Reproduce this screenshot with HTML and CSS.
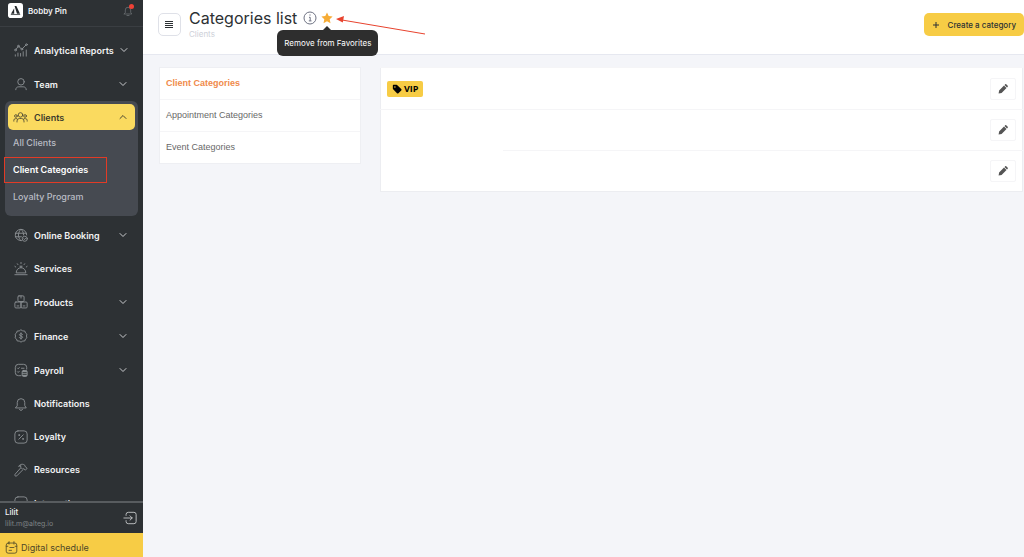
FILE: index.html
```html
<!DOCTYPE html>
<html lang="en">
<head>
    <meta charset="UTF-8">
    <meta name="viewport" content="width=device-width, initial-scale=1.0">
    <title>Categories list</title>
    <link rel="stylesheet" href="styles.css">
</head>
<body>
    <aside class="sidebar">
        <div class="brand">
            <svg class="brand-logo" viewBox="0 0 16 16">
                <rect width="16" height="16" rx="3" fill="#fff"/>
                <path d="M7 3.2h1.9l3.9 8.3H9.6z" fill="#23282b"/>
                <path d="M6.6 5.6v5.9H3.2z" fill="#23282b"/>
                <path d="M3 12.3h10" stroke="#23282b" stroke-width="0.8"/>
            </svg>
            <span class="brand-name">Bobby Pin</span>
            <button type="button" class="bell-btn" aria-label="Notifications">
                <svg class="icon" viewBox="0 0 16 16">
                    <path d="M3 12h10l-1.4-2.2V6.6a3.6 3.6 0 0 0-7.2 0v3.2zM6.6 14h2.8"/>
                </svg>
                <span class="bell-dot"></span>
            </button>
        </div>

        <nav class="menu">
            <a href="#" class="menu-item">
                <svg class="icon" viewBox="0 0 16 16">
                    <path d="M1.5 15v-1.5M4.5 15v-3.5M7.5 15v-3M10.5 15v-5M14 15V8"/>
                    <path d="M2.3 7.2l2.2-2.8M5.8 4.3l2.4 2.2M9.7 6.3l3.7-3.7"/>
                    <circle cx="1.7" cy="8" r="1"/><circle cx="5" cy="3.6" r="1"/><circle cx="9" cy="7" r="1"/><circle cx="14.2" cy="1.9" r="1"/>
                </svg>
                <span>Analytical Reports</span>
                <svg class="chevron" viewBox="0 0 8 8"><path d="M1 2.5l3 3 3-3"/></svg>
            </a>
            <a href="#" class="menu-item">
                <svg class="icon" viewBox="0 0 16 16">
                    <circle cx="8" cy="5.5" r="3.7"/>
                    <path d="M2 14.5c.2-2.2 1.4-3.3 3.5-3.3h5c2.1 0 3.3 1.1 3.5 3.3"/>
                </svg>
                <span>Team</span>
                <svg class="chevron" viewBox="0 0 8 8"><path d="M1 2.5l3 3 3-3"/></svg>
            </a>

            <div class="menu-group">
                <a href="#" class="menu-item active">
                    <svg class="icon icon-wide" viewBox="0 0 18 16">
                        <circle cx="9" cy="5.5" r="2.7"/><circle cx="3.5" cy="6.8" r="1.6"/><circle cx="14.5" cy="6.8" r="1.6"/>
                        <path d="M4.8 14v-1.2a3 3 0 0 1 3-3h2.4a3 3 0 0 1 3 3V14M1 13v-1a2 2 0 0 1 2-2h1.5M17 13v-1a2 2 0 0 0-2-2h-1.5"/>
                    </svg>
                    <span>Clients</span>
                    <svg class="chevron" viewBox="0 0 8 8"><path d="M1 5.5l3-3 3 3"/></svg>
                </a>
                <a href="#" class="submenu-item">All Clients</a>
                <a href="#" class="submenu-item current">Client Categories</a>
                <a href="#" class="submenu-item">Loyalty Program</a>
            </div>

            <a href="#" class="menu-item">
                <svg class="icon" viewBox="0 0 16 16">
                    <path d="M8.5 14.5a6.5 6.5 0 1 1 6-6.5M8 1.5c-4 3.500-4 9.500 0 13M8 1.500c2 1.700 3 4 3 6.500M1.500 6h12.700M1.500 10H8.500"/>
                    <circle cx="12.3" cy="12.3" r="2.9"/><path d="M11.2 12.3l.8.9 1.4-1.6"/>
                </svg>
                <span>Online Booking</span>
                <svg class="chevron" viewBox="0 0 8 8"><path d="M1 2.5l3 3 3-3"/></svg>
            </a>
            <a href="#" class="menu-item plain">
                <svg class="icon" viewBox="0 0 16 16">
                    <path d="M2.5 12a5.5 5.5 0 0 1 11 0zM1 14.5h14M8 6.5V5M6.7 4.8h2.6M8 .5v1.3M3.8 2l.7 1M12.2 2l-.7 1M1 5l1 .7M15 5l-1 .7"/>
                </svg>
                <span>Services</span>
            </a>
            <a href="#" class="menu-item">
                <svg class="icon" viewBox="0 0 16 16">
                    <rect x="4.5" y="1" width="7" height="6.5" rx="1.2"/>
                    <rect x="1" y="8" width="7" height="6.8" rx="1.2"/>
                    <rect x="8" y="8" width="7" height="6.8" rx="1.2"/>
                    <path d="M8 1v2.5M3.5 12.5h2M10.5 12.5h2"/>
                </svg>
                <span>Products</span>
                <svg class="chevron" viewBox="0 0 8 8"><path d="M1 2.5l3 3 3-3"/></svg>
            </a>
            <a href="#" class="menu-item">
                <svg class="icon" viewBox="0 0 16 16">
                    <path d="M8 1l2 1.2 2.3.1.8 2.2L14.8 6l-.6 2 .6 2-1.700 1.500-.8 2.200-2.300.1L8 15l-2-1.200-2.300-.1-.8-2.200L1.200 10l.6-2-.6-2 1.700-1.500.8-2.200L6 2.200z"/>
                    <path d="M9.8 6.3c-.4-.7-1-.9-1.8-.9-1.1 0-1.8.5-1.8 1.2C6.2 8.500 9.800 7.400 9.800 9.400c0 .8-.8 1.300-1.800 1.300s-1.600-.4-1.900-1.100M8 4.400v7.200"/>
                </svg>
                <span>Finance</span>
                <svg class="chevron" viewBox="0 0 8 8"><path d="M1 2.5l3 3 3-3"/></svg>
            </a>
            <a href="#" class="menu-item">
                <svg class="icon" viewBox="0 0 16 16">
                    <path d="M8 14.5H5A3.5 3.5 0 0 1 1.5 11V5A3.5 3.5 0 0 1 5 1.5h6A3.5 3.5 0 0 1 14.5 5v2M4 5.800l.8.800 1.300-1.400M8.500 6h3M4 10l.8.800 1.300-1.400"/>
                    <rect x="9.3" y="8.5" width="5.7" height="6.8" rx="1.5" fill="#8a8f92"/>
                    <path d="M10.3 11h3.7M10.3 13h3.7" stroke="#2d3134"/>
                </svg>
                <span>Payroll</span>
                <svg class="chevron" viewBox="0 0 8 8"><path d="M1 2.5l3 3 3-3"/></svg>
            </a>
            <a href="#" class="menu-item plain">
                <svg class="icon" viewBox="0 0 16 16">
                    <path d="M2 12.5h12l-1.7-2.8V6.2a4.3 4.3 0 0 0-8.6 0v3.5zM6.2 14a1.9 1.9 0 0 0 3.6 0"/>
                </svg>
                <span>Notifications</span>
            </a>
            <a href="#" class="menu-item plain">
                <svg class="icon" viewBox="0 0 16 16">
                    <rect x="1" y="1" width="14" height="14" rx="3.5"/>
                    <path d="M5.5 10.5l5-5"/><circle cx="5.8" cy="5.8" r=".6"/><circle cx="10.2" cy="10.2" r=".6"/>
                </svg>
                <span>Loyalty</span>
            </a>
            <a href="#" class="menu-item plain">
                <svg class="icon" viewBox="0 0 16 16">
                    <path d="M7.5 5.8l-6.2 7a1.3 1.3 0 0 0 1.9 1.9l6.6-6.6M5.5 3.5C7.5 1 10.5.8 12.3 2.6l.7 1.8 2 1.6-2 2.2-1.8-1.7-1.4.6-2.3-2.3.3-1.3z"/>
                </svg>
                <span>Resources</span>
            </a>
            <a href="#" class="menu-item">
                <svg class="icon" viewBox="0 0 16 16">
                    <rect x="1" y="1" width="14" height="14" rx="3.5"/>
                </svg>
                <span>Integrations</span>
            </a>
        </nav>

        <div class="user">
            <div class="user-info">
                <div class="user-name">Lilit</div>
                <div class="user-mail">lilit.m@alteg.io</div>
            </div>
            <button type="button" class="logout-btn" aria-label="Log out">
                <svg class="icon" viewBox="0 0 16 16">
                    <path d="M3.5 5V4A2.5 2.5 0 0 1 6 1.5h6.5A2.5 2.5 0 0 1 15 4v8a2.5 2.5 0 0 1-2.5 2.5H6A2.5 2.5 0 0 1 3.5 12v-1M1 8h9.5M8 5.5L10.5 8 8 10.5"/>
                </svg>
            </button>
        </div>
        <a href="#" class="schedule">
            <svg class="icon" viewBox="0 0 16 16">
                <rect x="1.5" y="2.5" width="13" height="12.5" rx="2.5"/>
                <path d="M1.5 6.5h2M12.5 6.5h2M5 .8v3M11 .8v3M6 8h5M5 11.5h3"/>
            </svg>
            <span>Digital schedule</span>
        </a>
    </aside>

    <div class="page">
        <header class="topbar">
            <button type="button" class="burger-btn" aria-label="Menu">
                <svg viewBox="0 0 9 8"><path d="M0 .5h8M0 2.5h8M0 4.5h8M0 6.5h8"/></svg>
            </button>
            <div class="heading">
                <div class="title-row">
                    <h1>Categories list</h1>
                    <svg class="info" viewBox="0 0 14 14">
                        <circle cx="7" cy="7" r="6"/><path d="M6 6.3h1.2v3.5M5.8 9.9h2.7"/><path d="M6.4 4h1.2"/>
                    </svg>
                    <button type="button" class="star-btn" aria-label="Remove from Favorites">
                        <svg viewBox="0 0 12 12"><path d="M6 .5l1.7 3.6 3.9.5-2.9 2.7.8 3.9L6 9.3l-3.5 1.9.8-3.9L.4 4.6l3.9-.5z"/></svg>
                        <span class="tooltip">Remove from Favorites</span>
                        <svg class="arrow" viewBox="0 0 90 22"><path class="line" d="M6 3l83 14"/><path class="head" d="M0 2l8-3L6.8 5.6z"/></svg>
                    </button>
                </div>
                <div class="crumb">Clients</div>
            </div>
            <button type="button" class="create-btn">
                <svg viewBox="0 0 8 8"><path d="M4 1v6M1 4h6"/></svg>
                <span>Create a category</span>
            </button>
        </header>

        <main class="content">
            <nav class="tabs">
                <a href="#" class="tab selected">Client Categories</a>
                <a href="#" class="tab">Appointment Categories</a>
                <a href="#" class="tab">Event Categories</a>
            </nav>

            <table class="categories">
                <tr>
                    <td colspan="2">
                        <span class="tag">
                            <svg viewBox="0 0 12 12"><path d="M1 1.8v3.7c0 .4.2.7.4.9l4.6 4.7c.5.5 1.2.5 1.7 0l3.4-3.4c.5-.5.5-1.2 0-1.7L6.4 1.4A1.4 1.4 0 0 0 5.5 1H1.8A.8.8 0 0 0 1 1.8zm2.5.8a.9.9 0 1 1 0 1.8.9.9 0 0 1 0-1.8z" fill-rule="evenodd"/></svg>
                            <span>VIP</span>
                        </span>
                    </td>
                    <td class="actions"></td>
                </tr>
                <tr>
                    <td class="blank" rowspan="2"></td>
                    <td></td>
                    <td class="actions"></td>
                </tr>
                <tr>
                    <td></td>
                    <td class="actions"></td>
                </tr>
            </table>
        </main>
    </div>

    <script>
        // Every category row gets the same edit button
        document.querySelectorAll('.actions').forEach(cell => {
            cell.innerHTML = `
                <button type="button" class="edit-btn" aria-label="Edit">
                    <svg viewBox="0 0 10 10">
                        <path d="M.6 9.4l.5-3L6 1.5l2.5 2.5-4.9 4.9zM6.5 1l.6-.6c.4-.4.9-.4 1.3 0l1.2 1.2c.4.4.4.9 0 1.3l-.6.6z"/>
                    </svg>
                </button>`;
        });
    </script>
</body>
</html>
```
FILE: styles.css
```css
* {
    margin: 0;
    padding: 0;
    box-sizing: border-box;
}

body {
    font-family: Inter, 'Liberation Sans', sans-serif;
    font-size: 9px;
    background: #f4f5f9;
    color: #2d3134;
    height: 100vh;
    display: flex;
    overflow: hidden;
}

a {
    color: inherit;
    text-decoration: none;
}

button {
    font: inherit;
    color: inherit;
    background: none;
    border: none;
    cursor: pointer;
}

svg {
    display: block;
    flex: none;
}

.icon {
    width: 14px;
    height: 14px;
    fill: none;
    stroke: #8f9497;
    stroke-width: 1;
    stroke-linecap: round;
    stroke-linejoin: round;
}

/* Sidebar */
.sidebar {
    flex: none;
    width: 143px;
    background: #2d3134;
    color: #f1f2f3;
    display: flex;
    flex-direction: column;
}

.brand {
    display: flex;
    align-items: center;
    gap: 5px;
    height: 27px;
    padding: 0 9px 5px 8px;
    border-bottom: 1px solid #3a3e42;
}

.brand-logo {
    width: 15px;
    height: 15px;
}

.brand-name {
    flex: 1;
    font-size: 8px;
    font-weight: 600;
}

.bell-btn {
    position: relative;
}

.bell-btn .icon {
    width: 12px;
    height: 12px;
    stroke: #6f7477;
}

.bell-dot {
    position: absolute;
    top: -1px;
    right: 0;
    width: 5px;
    height: 5px;
    border-radius: 50%;
    background: #ee4136;
}

.menu {
    flex: 1;
    min-height: 0;
    overflow: hidden;
    padding-top: 6px;
}

.menu-item {
    display: flex;
    align-items: center;
    height: 34px;
    padding: 0 16px 0 14px;
    gap: 6px;
    font-weight: 600;
}

.menu-item.plain {
    height: 33px;
}

.menu-item span {
    flex: 1;
    white-space: nowrap;
}

.chevron {
    width: 8px;
    height: 8px;
    fill: none;
    stroke: #c9cbcd;
    stroke-width: 1;
    stroke-linecap: round;
    stroke-linejoin: round;
}

.menu-group {
    display: flex;
    flex-direction: column;
    gap: 1px;
    margin: 0 5px 2px;
    padding: 3px 3px 6px;
    border-radius: 6px;
    background: #464a51;
}

.menu-group .menu-item {
    height: 26px;
    margin-bottom: -1px;
    padding: 0 8px 0 5px;
    border-radius: 5px;
    background: #fada5f;
    color: #3b3a2c;
}

.menu-item.active .icon,
.menu-item.active .chevron {
    stroke: #4a4732;
}

.menu-item .icon-wide {
    width: 15px;
}

.submenu-item {
    position: relative;
    height: 26px;
    line-height: 26px;
    padding-left: 5px;
    color: #b9bcc4;
    font-weight: 500;
}

.submenu-item.current {
    color: #fff;
    font-weight: 600;
}

/* Highlight frame round the current page */
.submenu-item.current::after {
    content: "";
    position: absolute;
    top: 0;
    bottom: 0;
    left: -4px;
    width: 101px;
    border: 1px solid #e23b26;
}

.user {
    display: flex;
    align-items: center;
    height: 32px;
    padding: 0 6px 0 5px;
    border-top: 2px solid #585c5f;
}

.user-info {
    flex: 1;
    font-size: 8px;
    line-height: 11px;
}

.user-name {
    font-weight: 500;
}

.user-mail {
    font-size: 7px;
    color: #7d8285;
}

.logout-btn .icon {
    stroke: #c9cbcd;
}

.schedule {
    display: flex;
    align-items: center;
    gap: 3px;
    height: 24px;
    padding: 4px 5px 0;
    background: #f7cc45;
    color: #4e4728;
}

.schedule .icon {
    width: 13px;
    height: 13px;
    stroke: #4e4728;
}

/* Top bar */
.page {
    flex: 1;
    min-width: 0;
}

.topbar {
    display: flex;
    align-items: center;
    height: 55px;
    padding: 0 0 5px 15px;
    background: #fff;
    border-bottom: 1px solid #e6e8f0;
}

.burger-btn {
    width: 23px;
    height: 23px;
    padding: 0 6px;
    border: 1px solid #dfe1e8;
    border-radius: 5px;
}

.burger-btn svg {
    width: 9px;
    height: 8px;
    stroke: #2d3134;
}

.heading {
    flex: 1;
    padding: 0 0 1px 8px;
}

.title-row {
    display: flex;
    align-items: center;
}

h1 {
    font-size: 16px;
    line-height: 20px;
    font-weight: 400;
}

.info {
    width: 14px;
    height: 14px;
    margin-left: 6px;
    fill: none;
    stroke: #6d7182;
}

.star-btn {
    position: relative;
    margin-left: 4px;
}

.star-btn svg {
    width: 12px;
    height: 12px;
    fill: #f6ac36;
}

.tooltip {
    position: absolute;
    top: 18px;
    left: -44px;
    width: 101px;
    line-height: 26px;
    border-radius: 6px;
    background: #2e2e2e;
    color: #fff;
    font-size: 8px;
    white-space: nowrap;
}

.tooltip::before {
    content: "";
    position: absolute;
    top: -4px;
    left: 46px;
    border: 4px solid transparent;
    border-top: none;
    border-bottom-color: #2e2e2e;
}

.star-btn .arrow {
    position: absolute;
    top: 5px;
    left: 15px;
    width: 90px;
    height: 22px;
    overflow: visible;
}

.arrow .line {
    stroke: #e8432e;
}

.arrow .head {
    fill: #e8432e;
}

.crumb {
    margin-top: 1px;
    font-size: 8px;
    line-height: 11px;
    color: #cdd0d8;
}

.create-btn {
    display: flex;
    align-items: center;
    gap: 8px;
    height: 23px;
    padding: 0 8px;
    border-radius: 5px;
    background: #f7cc45;
    font-size: 8px;
    font-weight: 500;
}

.create-btn svg {
    width: 8px;
    height: 8px;
    stroke: #2d3134;
}

/* Content */
.content {
    display: flex;
    align-items: flex-start;
    gap: 19px;
    padding: 12px 1px 0 16px;
}

.tabs {
    flex: 0 0 202px;
    background: #fff;
    border: 1px solid #eeeff3;
}

.tab {
    display: block;
    height: 32px;
    line-height: 31px;
    padding-left: 6px;
    color: #686868;
    font-family: 'Liberation Sans', sans-serif;
    border-bottom: 1px solid #f5f5f7;
}

.tab:last-child {
    height: 31px;
    border-bottom: none;
}

.tab.selected {
    color: #f08a4b;
    font-weight: 700;
}

.categories {
    flex: 1;
    border-collapse: collapse;
    background: #fff;
    border: 1px solid #ecedf1;
}

.categories td {
    height: 41px;
    padding-left: 6px;
    border-top: 1px solid #f5f5f7;
}

.categories tr:first-child td {
    height: 42px;
}

.categories .blank {
    width: 122px;
}

.categories .actions {
    width: 39px;
}

.tag {
    display: inline-flex;
    align-items: center;
    gap: 2px;
    height: 16px;
    padding: 0 5px;
    border-radius: 2px;
    background: #f7cc45;
    color: #000;
    font-family: 'Open Sans', sans-serif;
    font-weight: 700;
}

.tag svg {
    width: 10px;
    height: 10px;
}

.edit-btn {
    display: block;
    width: 26px;
    height: 22px;
    padding: 0 7px;
    border: 1px solid #f5f5f7;
    border-radius: 2px;
}

.edit-btn svg {
    width: 10px;
    height: 10px;
    fill: #555;
}
```
